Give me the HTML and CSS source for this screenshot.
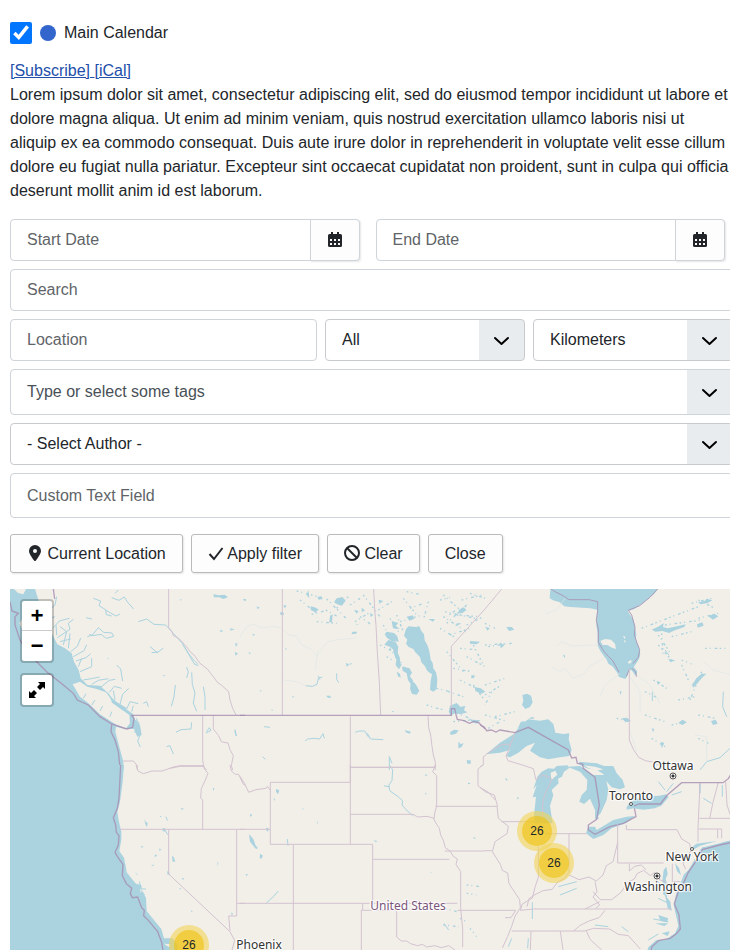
FILE: index.html
```html
<!DOCTYPE html>
<html lang="en">
<head>
  <meta charset="UTF-8">
  <meta name="viewport" content="width=device-width, initial-scale=1.0">
  <title>Main Calendar</title>
  <link rel="stylesheet" href="styles.css">
</head>
<body>
  <main class="page">
    <label class="calendar-toggle">
      <input type="checkbox" checked>
      <span class="calendar-dot"></span>
      <span>Main Calendar</span>
    </label>

    <div class="intro">
      <div><a href="#subscribe">[Subscribe] </a><a href="#ical">[iCal]</a></div>
      <p>Lorem ipsum dolor sit amet, consectetur adipiscing elit, sed do eiusmod tempor incididunt ut labore et dolore magna aliqua. Ut enim ad minim veniam, quis nostrud exercitation ullamco laboris nisi ut aliquip ex ea commodo consequat. Duis aute irure dolor in reprehenderit in voluptate velit esse cillum dolore eu fugiat nulla pariatur. Excepteur sint occaecat cupidatat non proident, sunt in culpa qui officia deserunt mollit anim id est laborum.</p>
    </div>

    <form class="filters" onsubmit="return false">
      <div class="dates">
        <div class="date-group">
          <input class="field" type="text" placeholder="Start Date" aria-label="Start Date">
          <button class="date-button" type="button" aria-label="Open the start date calendar">
            <svg width="14" height="16" viewBox="0 0 14 16"><path fill="currentColor" fill-rule="evenodd" d="M3 0h2v2h4V0h2v2h1.500a1.500 1.500 0 0 1 1.500 1.500V13.500a1.500 1.500 0 0 1-1.500 1.500h-11A1.500 1.500 0 0 1 0 13.500v-10A1.500 1.500 0 0 1 1.500 2H3zM2 7v2h2V7zM6 7v2h2V7zM10 7v2h2V7zM2 11v2h2v-2zM6 11v2h2v-2zM10 11v2h2v-2z"/></svg>
          </button>
        </div>
        <div class="date-group">
          <input class="field" type="text" placeholder="End Date" aria-label="End Date">
          <button class="date-button" type="button" aria-label="Open the end date calendar">
            <svg width="14" height="16" viewBox="0 0 14 16"><path fill="currentColor" fill-rule="evenodd" d="M3 0h2v2h4V0h2v2h1.500a1.500 1.500 0 0 1 1.500 1.500V13.500a1.500 1.500 0 0 1-1.500 1.500h-11A1.500 1.500 0 0 1 0 13.500v-10A1.500 1.500 0 0 1 1.500 2H3zM2 7v2h2V7zM6 7v2h2V7zM10 7v2h2V7zM2 11v2h2v-2zM6 11v2h2v-2zM10 11v2h2v-2z"/></svg>
          </button>
        </div>
      </div>
      <input class="field" type="text" placeholder="Search" aria-label="Search">
      <div class="place">
        <input class="field" type="text" placeholder="Location" aria-label="Location">
        <select class="field select" aria-label="Radius"><option>All</option></select>
        <select class="field select" aria-label="Length type"><option>Kilometers</option></select>
      </div>
      <input class="field tags" type="text" placeholder="Type or select some tags" aria-label="Tags">
      <select class="field select" aria-label="Author"><option>- Select Author -</option></select>
      <input class="field custom" type="text" placeholder="Custom Text Field" aria-label="Custom Text Field">

      <div class="actions">
        <button class="button" type="button">
          <svg width="16" height="16" viewBox="0 0 16 16"><path fill="currentColor" fill-rule="evenodd" d="M8 0a6 6 0 0 0-6 6c0 3 4 8 5.300 9.700a.9.9 0 0 0 1.400 0C10 14 14 9 14 6a6 6 0 0 0-6-6zm0 4a2 2 0 1 1 0 4 2 2 0 0 1 0-4z"/></svg>
          Current Location
        </button>
        <button class="button" type="submit">
          <svg width="16" height="16" viewBox="0 0 16 16"><path fill="none" stroke="currentColor" stroke-width="2" d="M1.500 9l4.500 5L14.500 3"/></svg>
          Apply filter
        </button>
        <button class="button" type="reset">
          <svg width="16" height="16" viewBox="0 0 16 16"><g fill="none" stroke="currentColor" stroke-width="2"><circle cx="8" cy="8" r="7"/><path d="M3 3l10 10"/></g></svg>
          Clear
        </button>
        <button class="button" type="button">Close</button>
      </div>
    </form>

    <div class="map">
      <!-- three drawing units per pixel, one group per map tile -->
      <svg class="tiles" viewBox="30 1767 2169 1083" preserveAspectRatio="xMinYMin slice" aria-hidden="true">
        <rect class="land" x="30" y="1767" width="9000" height="9000"/>

        <!-- British Columbia, Washington -->
        <g transform="translate(0 1755)">
          <path class="water" d="M30 12L105 12 120 60 158 150 172 178 195 190 215 205 222 230 236 255 242 280 262 300 300 302 325 325 345 350 375 370 400 388 405 405 420 420 425 450 412 455 402 432 375 432 348 425 346 440 354 470 362 500 370 530 370 556 30 556z"/>
          <path class="land" d="M218 298L240 290 262 305 290 312 318 322 335 345 360 370 388 390 390 415 378 430 350 420 300 388 262 352 240 335zM58 115l9-12 3 30-4-2zM42 12l12 12 16 4 8-16z"/>
          <path class="water thin" d="M105 40l30 25-20 20M130 90l35-30 5-25M120 110l45-15M158 130l20-22 30-8M170 150l-2-30M172 158l38-25-5-18 15-12M180 170l32-8M190 180l10-40-20-15M205 190l5-45M212 200l20-16 10-25M220 215l32-18 8-18M228 228l30-10 14-12M235 245l10-25M240 260l35-15 0-25M250 285l24-4 25-5M275 298l20-12 30-5M300 308l28-22 18-3M328 322l15-18 22 6M345 345l-5-28M360 358l8-30 18-18M380 372l10-22 25 6M395 380l5-18M250 340l8-14M275 360l10-15M300 378l8-15M330 395l5-15M280 40l22 8-5 14 20 12 2 15 16 4M316 75l32 18 12-6M335 38l22 8 16-10 10 16 18 20M345 25l10-10M262 155l15-5 18-22 16 14 25 2 5 10-22 6-16-12-25 4-10-4M258 98l18 4M450 185l22 18 18-14M455 203l20-2M415 110l25-8 22 16 35 2 50 55 36 62 12 5M548 178l18 28 16 20 12 12M575 262l2 36 8 26-5 30 10 25M526 300l-4 36-8 28M560 246l5 15-5 18M610 305l5 30 0 40M350 240l12 12 6 36M430 355l10-5 5 15M405 405l12 8-6 20 10 15-8 20 8 18M410 400l8 48M402 440l20 6M500 485l10-3 10 25M528 442l15-8 30-2 2-20M620 440l8-12 5 8-15 8M705 433l4 20-5-15"/>
          <path class="water" d="M640 28l16 3 18-2 10 8-14 5-12-5-16 0zM540 42l6 2-4 3zM660 134l10 4-8 4zM690 130l14 3-12 4zM705 174l8 2-5 10zM705 200l9 6-8 6zM330 335l20 16 30 18-10 8-34-24zM322 218l5 2-4 2zM485 272l12-2-4 4z"/>
          <path class="border" d="M506 12L506 128 516 140 520 152 534 158 544 168 560 186 572 202 582 210 600 235 622 252 640 275 652 292 664 300 686 320 690 345 698 370 708 390M608 392v135l4 20 8 8M640 392v40l16 20 8 18 20 4 6 20 10 18-6 30 4 13M370 528h30l12 14 0 13M510 550l30-6h70"/>
          <path class="country" d="M30 50L36 78 55 85 45 95 45 120 60 165 85 205 140 260 190 300 220 325 232 345 265 360 300 395 335 417 380 432 398 427 402 400 395 391 735 391M160 12l4 30M335 418L333 440 345 465 355 500 361 556"/>
        </g>

        <!-- Alberta to Ontario -->
        <g transform="translate(720 1755)">
          <path class="water" d="M498 132l8-8 22 2 10-2 6 14 8 10 2 18 8 14 6 18 4 26 6 10 2 16 8 12 4 20-2 30-10 8-10-6 2-26 4-20-14-10-8-16-10-10-4-16-14-14-6-10-14-6-8-10 4-12-10-12zM440 140l22 4 10 10 4 16-20-2-14-8-8-12zM445 165l22 6 8 14-2 18 6 14 4 26-6 10-10-12 2-18-6-14-4-16-10-8-16-6zM486 245l22 4 8 14-6 10 8 16 10 10 10 18-8 12-14-2-6-16 2-14-8-12-4-20-12-8zM455 108l20 6-8 8 12 10-20-2zM470 260l10 6 2 12-8-4zM500 95l18-4 5 10-15 6z"/>
          <path class="water" d="M290 40l18-4 8 12-10 14-14-4-10-6zM212 64l16 4 8 6-10 8-14-8zM232 36l12-2 4 8-12 2zM270 92l8-4-2 24-8 0zM120 82l10 0 2 8-10 0zM130 60l10 2-6 8zM50 64l10 4-8 4zM10 42l8 0 0 6-8-2zM205 15l3 25-8-10zM342 74l14 4-6 8zM365 68l10 8-10 6zM416 44l14 4-12 8zM390 84l10 6-8 6zM318 233l10 6-8 6zM328 236l8-2-4 6zM258 332l12 0 4 6-10 0zM338 140l14 0-4 6-14 2zM136 188l5 4-4 2zM36 148l8-1-2 6zM25 202l8 2-4 4zM155 334l7 0-2 4zM350 116l5 2-5 3zM92 374l6 0 0 4zM60 315l5 2-4 3zM455 378l8 0-4 4zM630 442l12-8 14 2-8 10-16 4zM655 470l8 8 8-4-6 12-10 4zM680 526l12 0 0 10-10 0zM495 436l18 4-4 6-12-4zM656 75l14-8 10 8-14 10-10 0zM565 102h20l-6 8zM650 115h14l-14 8zM690 168l30 2-10 8-20-2zM704 306l18 4 14 10-12 6-18-8zM630 362l20-8 12 12 14-4-4 14 10 6-20 6-16-4-14 8-6-12zM695 270l10 2-4 8-8-2zM685 400l12 4 24 2-10 10-14-4z"/>
          <path class="water specks" d="M170 18l75 20M215 88l45-12 35 20M260 42l60 60M290 70l40-40M370 30l50 65M360 95l35 25M415 75l40-25M450 100l25 40M480 110l60-18M420 180l40 20M450 190l40 60M490 40l40 50M510 70l40-15M565 50l-15 55M610 30l45 40-35 25M620 115l60-55M650 90l70 5M690 25l45 15M630 150l60-20M660 190l55 5M680 215l55 30M640 250l55 10M660 285l70 35M625 320l45 15M590 310l40 10M650 385l40 15M470 90l20 50M475 220l50 80M540 210l35 60M180 45l50 40M230 110l60 5M330 60l30-20M345 110l40-25M430 120l30 60M440 215l25 15M500 20l40 8M600 45l30-8M600 130l50 30M665 45l60-15M680 120l50-25M620 200l50 60M700 180l30 60M700 300l30 40M560 360l50 15M640 410l55-5M615 80l90 20M610 95l70 45"/>
          <path class="water thin" d="M197 302l20 2 14-6 4-18 12-4M234 272l6 12M290 265l0 18 6 10M195 468l8-6 20-2 16 2 10-16 4 14M346 442l12-4 16 0 10 16 8 8 38 2M382 445l8 14M448 555v-40l8 20M72 425l18 2M68 515l8 8"/>
          <path class="river" d="M0 155l20-30 20-8 25 12 35-5 25 5 20 20 25 5 15 25 30 15 15 18 15-18 15-22 30-8 60-5M225 255l10-60M130 285l40 5 30 12"/>
          <path class="border" d="M127 12v378M401 12l3 60 4 50 4 80 6 90 4 98M634 392V184L735 72M331 394v161M331 547h255M564 392l2 36 6 22 4 34 4 26 6 22 0 23"/>
          <path class="country" d="M0 391h634v-20l10 0 4 18 4 14 20 4 16 8 14-6 14 4 10 10 9 8"/>
        </g>

        <!-- Hudson Bay, Quebec -->
        <g transform="translate(1455 1755)">
          <path class="water" d="M196 12h322l-10 14-16 12-16 14-28 20-20 6 10 16 8 14 4 22 4 18-2 18 8 18 6 24-4 14-10 16-6 8 10 12 0 10-6 2-10-14-8 0-4 12-6 14-20-6-6-14-14-18-12-8-6-14-8-10-10-14-8-16 0-36-4-24 2-28 0-20-20-4-60-4-18-2-14-12-20-6-10-6z"/>
          <path class="land" d="M346 168l14-6 18 2 12 12 3 16-12-4-14-8-14 0zM414 152l8 4-4 6zM417 165l6 4-4 4zM428 232l10-8 2 8-8 4z"/>
          <path class="water" d="M112 330l14-4 12 6 5 20-8 14-14 6-10-12 4-12zM500 134l22-10 14-10-2 12 14 4 28-6 26-6-4 8-28 10-18 8-20-6-20 2zM640 52l18-4 10-6 14 4-14 8-22 4zM670 94l18-8 12 8-16 10zM636 118l16-6 4 10-18 6zM550 222l22 4-16 6zM410 400l16-2 12 10-16 4zM622 300l12-20 16-14 14 0-14 14-14 16-12 12zM678 408l14-4 6 12-14 4zM580 414l12-10 14 8-14 8zM64 126l16 0 8 8-16 4zM45 172l12 10-10 8zM0 125l14 4-6 8zM234 208l7 4-3 8zM404 318l6 2-4 10zM200 462l8 2-4 6zM500 430l8 2-4 10zM515 288l12 4-8 8zM528 470l10 4-8 16z"/>
          <path class="water specks" d="M470 130l90-35 80-30M640 45l50 25M530 145l5 70M520 180l40 45M560 155l60-15M590 225l30 12M660 190l70 0M590 240l20 45M650 260l-35 85M505 285l40 25M480 320l40 20M580 345l50-10M640 390l50 10M480 390l60 20M560 420l40-10M500 460l40 25M395 400l40 10M640 460l30 15M0 180l80-5M0 115l30 15M0 300l60-20M20 320l-20 40M0 390l70 20M10 430l35-20M540 120l110-15M520 150l40 60M620 55l60-15M640 100l60-15M10 185l50-8M0 330l50-30M30 395l60-15"/>
          <path class="water thin" d="M645 555l20-25 40-12 30-28M715 320l-2 45 12 30M502 320v28M540 195l12 15M620 300l30-28"/>
          <path class="river" d="M215 185l15-15 30 12 80-2M200 245l25 15 15-10 25 30 30-12 20-25 45-25M345 335l15-35 45-35M435 275l30 45 0 60M455 270l35 25 35 60M240 40l-25 35-35 12M740 270l-55-15-30-25M630 450l35 5 0 75M455 500l-20-60"/>
          <path class="coast" d="M198 12l12 8 24 12 18 12 60 0 26 6 0 26-4 30 6 26 0 40 16 26 14 16 14 14 18 34M518 12l-22 24-32 26-34 14 10 14 10 36-2 24 8 24 8 20-4 22-16 20M424 275l10-24M454 275l-2-14-12-12"/>
          <path class="border" d="M0 72L50 12M433 250v215l12 28 16 24 20 10 22 4 20 10"/>
        </g>

        <!-- Great Lakes -->
        <g transform="translate(1440 2100)">
          <path class="water" d="M18 163L60 128 105 100 112 88 130 68 145 58 180 62 205 58 220 72 226 98 250 102 268 100 266 118 275 150 268 168 240 172 205 178 180 172 150 152 165 128 140 138 115 158 90 172 78 168 90 150 60 158zM114 84L122 66 134 62 120 84zM145 56L158 50 164 56z"/>
          <path class="water" d="M162 345L168 290 158 292 170 255 160 268 172 230 185 215 205 205 222 206 230 198 262 196 268 204 252 215 246 230 234 236 236 250 215 270 220 285 210 318 218 370 165 370zM262 200L300 198 340 225 375 225 385 270 380 300 362 340 345 358 345 330 330 296 312 312 298 305 305 285 320 270 322 240 300 215zM296 185L350 190 372 198 400 198 410 220 428 240 435 262 420 268 395 262 376 240 370 222 350 210 320 205 300 195z"/>
          <path class="water" d="M325 380L345 380 350 390 400 360 440 350 465 348 440 368 395 385 370 405 340 417 318 400zM350 348L358 354 348 360z"/>
          <path class="land" d="M310 196L345 200 370 208 350 212 325 204zM212 218L226 212 232 224 214 240z"/>
          <path class="border" d="M105 98L92 133 78 168 84 182 130 196 160 206 168 240 185 226 208 230 216 238 195 280 188 310 188 370M18 163L66 133 92 133M0 262L24 276 46 300M18 165L10 170 10 195 0 200"/>
          <path class="country" d="M0 75L12 80 20 92 34 90 48 96 60 90 105 98 145 82 265 150 275 174 288 172 292 190 308 192 310 205 345 232 358 315 350 358 325 375 325 390 345 403 390 380 430 370 468 350 462 318 476 312"/>
        </g>

        <!-- West coast -->
        <g transform="translate(0 2295)">
          <path class="water" d="M30 0h342l-4 50-8 60-8 30 4 26 8 34 0 24-6 34 14 20 6 30 2 14 16 20 12 14 16 4 0 16 14 22 2 40 26 32 18 22 8 28 26 0 15 20 0 15H30z"/>
          <path class="land" d="M492 536l20 2-6 8zM420 370l6 8-4 6z"/>
          <path class="water" d="M433 162l4 8 6 4-2 12-5-8zM488 190l8 0-2 10-6-2zM516 272l5 4 5 14-8 0zM502 318l6 2 0 10-6-2zM545 338l7 2-3 6zM537 370l6 0-2 4zM478 250l6 4-6 4zM465 268l7 4-8 4zM480 152l6 4-6 0zM544 128l8 4-8 2zM638 68l5 2-3 8zM652 290l3 4-2 10zM425 242l6 4-8 2zM405 322l10 8-6-2zM573 436l6 4-6 0zM694 442l5 4-4 8z"/>
          <path class="water thin" d="M418 350l6 22 14 0M424 376l10 14M495 195l8 14M455 302l6-2M498 155l4 12"/>
          <path class="border" d="M360 193h375M506 193v134L690 500l14 26-8 29M608 193v-88l-6-6 2-28 12-26 8-20-10-12-4-13M408 0l6 18 16 8 26-8 30 0 34-12 20-4h70M690 0l4 18 12 10 10 0 14 30 5 2M710 193v260h-24l4 44M710 415h25"/>
          <path class="country" d="M362 0l-2 40-3 60-5 30-12 28 7 22 2 22 8 10-2 28-10 22 12 20 12 16-2 34 12 24 16 14-4 16 6 12 16-2 12 32 8 8-2 16 14 14 28 34 12 32 4 24"/>
        </g>

        <!-- Central states -->
        <g transform="translate(720 2295)">
          <path class="water" d="M27 208l8 8 6 8 5 16 8 10-6 2-10-12-8-10zM60 266l9 6-6 10-4-4zM108 72l10 4-4 12-6-8zM78 188l8 2-2 10-5-4zM16 328l8 0-4 6zM100 100l5 2-2 6zM30 146l7 4-6 6zM230 168l3 4-1 8zM188 128l3 4-3 3zM400 226l12 2-4 4zM555 28l8 2-6 4zM556 82l4 4-4 4zM684 52l8 4-8 2zM700 216l8 4-6 2zM572 320l4 4-4-1z"/>
          <path class="water thin" d="M448 0l10 14-2 32-10 16 4 16 26 18 12 12-2 12 12 14 20 18M142 222l2 20M115 378l-14 16-22 20M432 62l18 4M612 475l14 20"/>
          <path class="water specks" d="M680 360l40 5M680 385l30 5M615 430l35 10M610 480l45 5M690 490l20 25M660 460l20 10"/>
          <path class="border" d="M91 52h240V0M331 0v238M331 7h255M331 148h188l14 8 28-2 22 6M91 52v186h307M0 193h91M160 238v317M398 238v176M398 283h230M0 415h652M368 415v20h-4v120M368 436h102v80l14 12 16 0 12 8 20 6 16-4 12 8 24-4 20 6 22-6 20 14M586 0l-8 20 12 12v92l-6 20-2 20 8 14 8 12 4 20 8 16 6 22 14 10 10 16 12 8-4 16 14 22v110l6 62v55M586 124h149M614 258h121M652 436h83M728 0l-14 12 0 50 21 18M0 34l14 22 12 26 22-8 30-4 4-6 9 12"/>
        </g>

        <!-- East coast -->
        <g transform="translate(1455 2295)">
          <path class="water" d="M740 225l-50 12-38 10-14 18-12 24-14 24-16 16-8 22-10 20-6 22-6 28 8 34 6 28-10 22-30 20-26 0-24 22-10 30h700V225z"/>
          <path class="land" d="M700 215l-44 12-24 10-4 10 32-2 50-12zM540 440l12 12-8 8z"/>
          <path class="water" d="M425 126l10-14 26-14 36-4 26-2 20-4 8 8-22 26-20 8-34 4-30-4-20 4z"/>
          <path class="water" d="M536 315l8-10 4 22-6 14 6 24-2 32-12-10 4-22-6-16zM570 295l12 14 6 22-12-12zM620 248l14-12 62-8-50 14-22 12zM540 390l16 20 4 28-12-8zM520 450l30 10-4 12-20-4zM510 475l40 0-12 8zM642 56h5v30l-5-4zM530 505l24-6-6 14zM96 96l6 2-4 6zM60 40l8 2-4 6z"/>
          <path class="water thin" d="M142 412v50M225 390l50-20M220 365l55-15M515 348l25 20M520 400l30 15M505 462l45 8M490 525l30-18M655 100l25 15M560 90l30-10M520 50l20 25M545 80l20-25M712 60l0 35M130 520l-2 30M80 520l-10 25M430 500l-20-15M330 480l40 5"/>
          <path class="border" d="M0 124h36l4 36 30 24-4 22-36 24-8 30 24 38 6 18 16 8 4 32 32 48 2 24-16 26-10 30-12 30-16 35M0 80l28 10 10 34M0 257h20M50 170h100M182 206h122M160 245v92l-10 30-8 32-30 18-6 18M252 206v115l-12 18-24 14-14 20-28 4-24 12-18 12-6 24M252 330l30 14 30-8 22 12 20-18 10-28 20-12 14-58M398 178v116h138M330 350l6 30-12 16 20 24-12 10M324 380l22 24 34 0 28-22 20-30 20-10 8-16 20-10 20 16 14-10 14 22 20 8M433 296v22l16-14 20-4 14 14M424 180v14h152l14 28 24 14 4 22-18 22-6 16 8 16M562 296v54h24M645 100h-2l-4 90v40M643 160h92M640 192h70v28M698 192v28M645 52l-2 48M700 52l-16 60-10 48M722 50l4 70 10 30M80 498h218l28-8 48 2 26 16 30 4 36 40M0 436h92l-14 22h-18M106 436l40-4h414M360 436l-18 22-30 10-28 14-18 16M300 432l44-22M304 498l12 26 34 31M138 498l-2 57M226 498l8 57"/>
          <path class="country" d="M447 123l15-6h64l20-26 44-38h124l16-12 16-28"/>
          <path class="country" d="M740 232l-36 8-52 14-16 30-26 38-16 36-14 22-12 36 14 34 4 42-12 14-18 14-34 6-22 20-2 14"/>
        </g>
      </svg>

      <div class="place-name" style="left: 663px; top: 177px">Ottawa</div>
      <div class="place-name" style="left: 621px; top: 207px">Toronto</div>
      <div class="place-name" style="left: 682px; top: 268px">New York</div>
      <div class="place-name" style="left: 648px; top: 298px">Washington</div>
      <div class="place-name" style="left: 249px; top: 356px">Phoenix</div>
      <div class="place-name nation" style="left: 398px; top: 317px">United States</div>
      <span class="town capital" style="left: 663px; top: 187px"></span>
      <span class="town" style="left: 621px; top: 215px"></span>
      <span class="town" style="left: 682px; top: 260px"></span>
      <span class="town capital" style="left: 647px; top: 287px"></span>

      <button class="cluster" type="button" style="left: 527px; top: 242px"><span>26</span></button>
      <button class="cluster" type="button" style="left: 544px; top: 274px"><span>26</span></button>
      <button class="cluster" type="button" style="left: 179px; top: 356px"><span>26</span></button>

      <div class="map-controls">
        <div class="control">
          <button type="button" aria-label="Zoom in">+</button>
          <button type="button" aria-label="Zoom out">−</button>
        </div>
        <div class="control">
          <button type="button" aria-label="View fullscreen">
            <svg width="16" height="16" viewBox="0 0 16 16"><path d="M9 0h7v7l-2-2-3 3-3-3 3-3zM0 9l2 2 3-3 3 3-3 3 2 2H0z"/></svg>
          </button>
        </div>
      </div>
    </div>
  </main>
</body>
</html>
```
FILE: styles.css
```css
* {
  box-sizing: border-box;
}

body {
  margin: 0;
  overflow: hidden;
  background-color: #fff;
  color: #22262a;
  font-family: 'Liberation Sans', Arial, sans-serif;
  font-size: 16px;
  line-height: 24px;
}

/* the form runs slightly past the right side of the window */
.page {
  display: flex;
  flex-direction: column;
  height: 100vh;
  margin: 0 -3px 0 10px;
  padding-top: 21px;
}

.calendar-toggle {
  display: flex;
  align-items: center;
  gap: 8px;
}

.calendar-toggle input {
  width: 22px;
  height: 22px;
  margin: 0;
}

.calendar-dot {
  width: 16px;
  height: 16px;
  border-radius: 50%;
  background-color: #36c;
}

.intro {
  margin: 14px 0 16px;
}

.intro p {
  margin: 0;
}

a {
  color: #224faa;
}

.filters {
  display: flex;
  flex-direction: column;
  gap: 8px;
}

.field {
  display: block;
  width: 100%;
  min-width: 0;
  height: 42px;
  padding: 0 16px;
  border: 1px solid #ced4da;
  border-radius: 4px;
  background-color: #fff;
  color: #22262a;
  font: inherit;
}

.field::placeholder {
  color: #5f6468;
  opacity: 1;
}

.select,
.tags {
  appearance: none;
  background-image: url("data:image/svg+xml,%3Csvg xmlns='http://www.w3.org/2000/svg' width='45' height='60' viewBox='0 0 45 60'%3E%3Cpath fill='%23e9ecef' d='M0 0h45v60H0z'/%3E%3Cpath fill='none' stroke='%23000' stroke-width='2' stroke-linecap='round' stroke-linejoin='round' d='M16 28l6.500 6 6.500-6'/%3E%3C/svg%3E");
  background-repeat: no-repeat;
  background-position: right center;
}

.select {
  border-color: #c8cbce;
}

.tags {
  height: 46px;
}

.tags::placeholder {
  color: #495057;
}

.custom {
  height: 45px;
}

.dates {
  display: grid;
  grid-template-columns: 1fr 1fr;
  gap: 16px;
  padding-right: 8px;
}

.date-group {
  display: flex;
}

.date-group .field {
  flex: 1;
  border-radius: 4px 0 0 4px;
}

.date-button {
  display: flex;
  align-items: center;
  justify-content: center;
  width: 50px;
  margin-left: -1px;
  padding: 0;
  border: 1px solid #ced4da;
  border-radius: 0 4px 4px 0;
  background-color: #fdfdfd;
  box-shadow: 1px 1px 2px rgba(0, 0, 0, 0.1);
  color: #22262a;
}

.place {
  display: grid;
  grid-template-columns: 1fr 200px 200px;
  gap: 8px;
}

.actions {
  display: flex;
  gap: 8px;
  margin: 8px 0 16px;
}

.button {
  height: 39px;
  padding: 0 16px;
  border: 1px solid #b8babc;
  border-radius: 3px;
  background-color: #fdfdfd;
  box-shadow: 1px 1px 2px rgba(0, 0, 0, 0.1);
  color: #22262a;
  font: inherit;
}

.button svg {
  vertical-align: -2px;
}

.map {
  position: relative;
  flex: 1;
  min-height: 0;
  overflow: hidden;
  background-color: #f2efe9;
}

.tiles {
  display: block;
  width: 100%;
  height: 100%;
}

.land {
  fill: #f2efe9;
}

.water {
  fill: #aad3df;
}

.thin {
  fill: none;
  stroke: #aad3df;
  stroke-width: 3;
}

.specks {
  fill: none;
  stroke: #aad3df;
  stroke-width: 4;
  stroke-dasharray: 5 9 3 12 8 7;
}

.river {
  fill: none;
  stroke: #dfe7e6;
  stroke-width: 2;
}

.border {
  fill: none;
  stroke: #d3c3d0;
  stroke-width: 3;
}

.coast {
  fill: none;
  stroke: #a99cbb;
  stroke-width: 3;
}

.country {
  fill: none;
  stroke: #a68cb0;
  stroke-width: 4;
  stroke-opacity: 0.8;
}

/* map items are centred on their coordinates */
.place-name,
.town,
.cluster {
  position: absolute;
  transform: translate(-50%, -50%);
}

.place-name {
  color: #333;
  font: 12px/16px 'Noto Sans', sans-serif;
  white-space: nowrap;
  text-shadow: 0 0 2px #fff, 1px 1px 1px #fff, -1px -1px 1px #fff, 1px -1px 1px #fff, -1px 1px 1px #fff;
}

.nation {
  color: #7b567b;
}

.town {
  width: 4px;
  height: 4px;
  border: 1px solid #555;
  border-radius: 50%;
  background-color: #fff;
}

.capital {
  width: 7px;
  height: 7px;
  background: radial-gradient(#333 1px, #fff 2px);
}

.cluster {
  display: flex;
  width: 40px;
  height: 40px;
  padding: 5px;
  border: 0;
  border-radius: 50%;
  background-color: rgba(241, 211, 87, 0.6);
}

.cluster span {
  flex: 1;
  border-radius: 50%;
  background-color: rgba(240, 194, 12, 0.6);
  color: #22262a;
  font: 12px/30px 'Liberation Sans', Arial, sans-serif;
}

.map-controls {
  position: absolute;
  top: 10px;
  left: 10px;
  display: grid;
  gap: 10px;
}

.control {
  border: 2px solid rgba(0, 0, 0, 0.2);
  border-radius: 4px;
  background-color: #fff;
  background-clip: padding-box;
}

.control button {
  display: flex;
  align-items: center;
  justify-content: center;
  width: 30px;
  height: 30px;
  padding: 0;
  border: 0;
  background: none;
  color: #000;
  font: bold 22px/30px 'Liberation Mono', monospace;
}

/* the glyphs sit high in their line */
.control:first-child button {
  padding-top: 4px;
}

.control button:first-child:not(:last-child) {
  border-bottom: 1px solid #ccc;
}
```
